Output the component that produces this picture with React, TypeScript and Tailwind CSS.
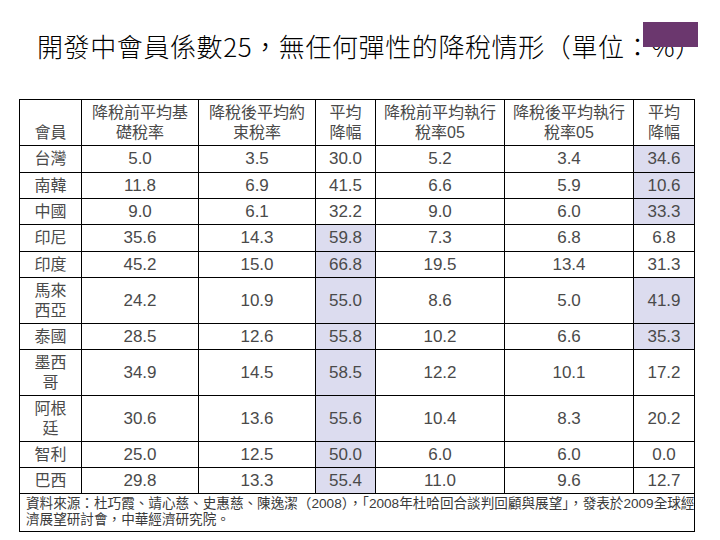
import React from "react";

type Row = {
  name: React.ReactNode;
  v: string[];
  hl: boolean[];
  h: string;
};

const rows: Row[] = [
  { name: "台灣", v: ["5.0", "3.5", "30.0", "5.2", "3.4", "34.6"], hl: [false, false, false, false, false, true], h: "h-[27px]" },
  { name: "南韓", v: ["11.8", "6.9", "41.5", "6.6", "5.9", "10.6"], hl: [false, false, false, false, false, true], h: "h-[26px]" },
  { name: "中國", v: ["9.0", "6.1", "32.2", "9.0", "6.0", "33.3"], hl: [false, false, false, false, false, true], h: "h-[26px]" },
  { name: "印尼", v: ["35.6", "14.3", "59.8", "7.3", "6.8", "6.8"], hl: [false, false, true, false, false, false], h: "h-[27px]" },
  { name: "印度", v: ["45.2", "15.0", "66.8", "19.5", "13.4", "31.3"], hl: [false, false, true, false, false, false], h: "h-[26px]" },
  { name: <>馬來<br />西亞</>, v: ["24.2", "10.9", "55.0", "8.6", "5.0", "41.9"], hl: [false, false, true, false, false, true], h: "h-[46px]" },
  { name: "泰國", v: ["28.5", "12.6", "55.8", "10.2", "6.6", "35.3"], hl: [false, false, true, false, false, true], h: "h-[26px]" },
  { name: <>墨西<br />哥</>, v: ["34.9", "14.5", "58.5", "12.2", "10.1", "17.2"], hl: [false, false, true, false, false, false], h: "h-[46px]" },
  { name: <>阿根<br />廷</>, v: ["30.6", "13.6", "55.6", "10.4", "8.3", "20.2"], hl: [false, false, true, false, false, false], h: "h-[46px]" },
  { name: "智利", v: ["25.0", "12.5", "50.0", "6.0", "6.0", "0.0"], hl: [false, false, true, false, false, false], h: "h-[26px]" },
  { name: "巴西", v: ["29.8", "13.3", "55.4", "11.0", "9.6", "12.7"], hl: [false, false, true, false, false, false], h: "h-[26px]" },
];

const headers: React.ReactNode[] = [
  <>降稅前平均基<br />礎稅率</>,
  <>降稅後平均約<br />束稅率</>,
  <>平均<br />降幅</>,
  <>降稅前平均執行<br />稅率05</>,
  <>降稅後平均執行<br />稅率05</>,
  <>平均<br />降幅</>,
];

export default function App() {
  return (
    <div className="relative w-[720px] h-[540px] bg-white overflow-hidden text-[#4a4a4a] [font-family:'Liberation_Sans','Noto_Sans_CJK_TC',sans-serif]">
      <div className="pt-[31px] pl-[37px] h-[99px]">
        <div className="text-[26px] leading-[30px] text-black whitespace-nowrap [font-family:'Noto_Sans_CJK_TC',serif] font-light tracking-[0.6px]">
          開發中會員係數25，無任何彈性的降稅情形（單位：%）
        </div>
      </div>
      <div className="absolute left-[643px] top-[22px] w-[55px] h-[25px] bg-[#6b376e]" />

      <div className="ml-[19px] w-[676px] border-l border-t border-black grid grid-cols-[62px_117px_117px_60px_129px_129px_61px] text-[16px]">
        <div className="h-[46px] border-r border-b border-black flex items-end justify-center pb-[2px] leading-[20px]">會員</div>
        {headers.map((h, i) => (
          <div key={i} className="h-[46px] border-r border-b border-black flex items-center justify-center text-center leading-[20px]">
            <div>{h}</div>
          </div>
        ))}
        {rows.map((r, ri) => (
          <React.Fragment key={ri}>
            <div className={`${r.h} border-r border-b border-black flex items-center justify-center text-center leading-[20px]`}>
              <div>{r.name}</div>
            </div>
            {r.v.map((val, ci) => (
              <div
                key={ci}
                className={`${r.h} border-r border-b border-black flex items-center justify-center text-[17px] ${r.hl[ci] ? "bg-[#dcdcef]" : ""}`}
              >
                {val}
              </div>
            ))}
          </React.Fragment>
        ))}
        <div className="col-span-7 h-[38px] border-r border-b border-black pl-[6px] pt-[2px] text-[13.6px] leading-[16px] text-[#3a3a3a] whitespace-nowrap">
          資料來源：杜巧霞、靖心慈、史惠慈、陳逸潔（2008），「2008年杜哈回合談判回顧與展望」，發表於2009全球經
          <br />
          濟展望研討會，中華經濟研究院。
        </div>
      </div>
    </div>
  );
}
